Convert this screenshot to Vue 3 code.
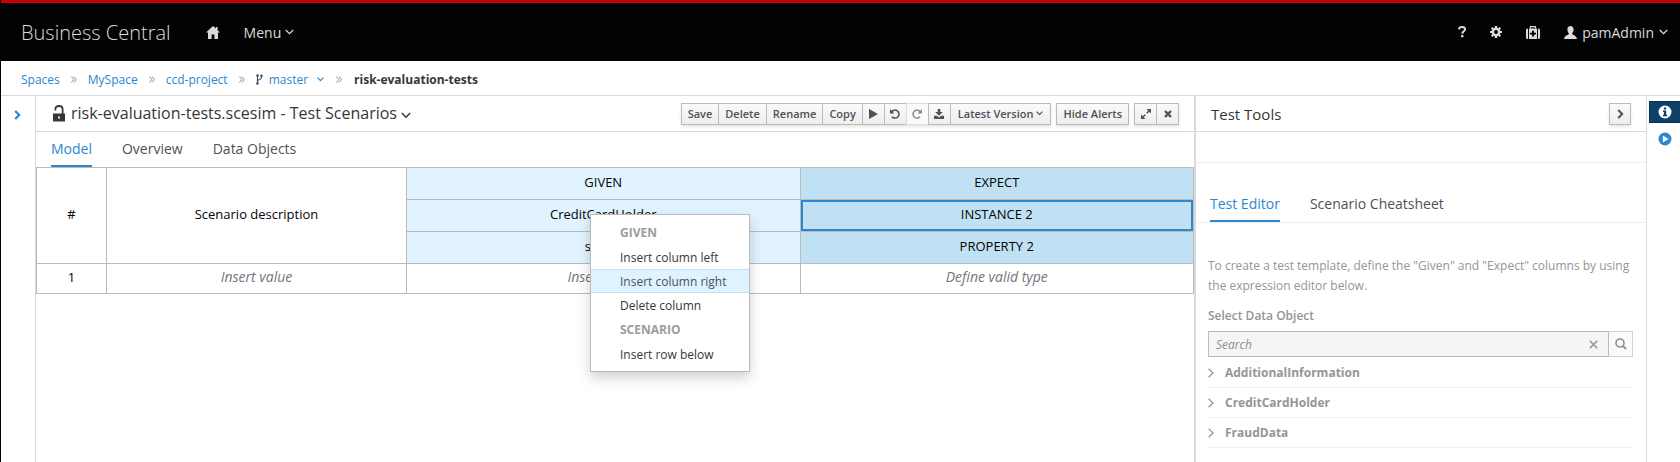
<script setup>
import { ref } from 'vue'

const crumbs = ['Spaces', 'MySpace', 'ccd-project']
const tabs = ['Model', 'Overview', 'Data Objects']
const toolTabs = ['Test Editor', 'Scenario Cheatsheet']
const dataObjects = ['AdditionalInformation', 'CreditCardHolder', 'FraudData']
const query = ref('')
</script>

<template>
  <div class="app">
    <header class="masthead">
      <span class="brand">Business Central</span>
      <button class="nav home" aria-label="Home">
        <svg width="14" height="13" viewBox="0 0 14 13"><path d="M7 0 0 6.600h2V13h3.600V8.600h2.800V13H12V6.600h2L11.600 4.300V1H9.800v1.600z" fill="currentColor" /></svg>
      </button>
      <button class="nav menu-btn">Menu
        <svg width="9" height="6" viewBox="0 0 9 6"><path d="M.8 1 4.500 4.600 8.200 1" fill="none" stroke="currentColor" stroke-width="1.300" /></svg>
      </button>
      <div class="utilities">
        <button class="nav" aria-label="Help">
          <svg width="8" height="12" viewBox="0 0 8 12"><path d="M1 3.400C1.200 1.800 2.400 1.100 4 1.100s3 .8 3 2.300c0 1.800-2.700 2-2.700 4.300" fill="none" stroke="currentColor" stroke-width="2" /><path d="M3.100 9h2.300v2.300H3.100z" fill="currentColor" /></svg>
        </button>
        <button class="nav" aria-label="Settings">
          <svg width="12" height="12" viewBox="0 0 12 12"><circle cx="6" cy="6" r="3.200" fill="none" stroke="currentColor" stroke-width="2.600" /><path d="M6 0v2M6 10v2M0 6h2M10 6h2M1.700 1.700l1.500 1.500M8.800 8.800l1.500 1.500M1.700 10.300l1.500-1.500M8.800 3.200l1.500-1.500" stroke="currentColor" stroke-width="2.200" /></svg>
        </button>
        <button class="nav" aria-label="Applications">
          <svg width="14" height="13" viewBox="0 0 14 13"><path d="M4.500 2.500V.7h5v1.800" fill="none" stroke="currentColor" stroke-width="1.200" /><path d="M2 2.500H1.500Q0 2.500 0 4v7.500Q0 13 1.500 13H2zM12 2.500h.5Q14 2.500 14 4v7.500q0 1.500-1.500 1.500H12z" fill="currentColor" /><path fill-rule="evenodd" d="M3 2.500h8V13H3zM6.100 4.700v2H4.100v1.900h2v2h1.900v-2h2V6.700H8v-2z" fill="currentColor" /></svg>
        </button>
        <button class="nav user">
          <svg width="13" height="13" viewBox="0 0 13 13"><path d="M6.500 0C8.500 0 9.600 1.300 9.600 3.500c0 1.800-.7 3.200-1.600 4 0 1.600 4.500 1.500 5 5.500H0c.5-4 5-3.900 5-5.500-.9-.8-1.600-2.200-1.600-4C3.400 1.300 4.500 0 6.500 0z" fill="currentColor" /></svg>
          <span>pamAdmin</span>
          <svg width="9" height="6" viewBox="0 0 9 6"><path d="M.8 1 4.500 4.600 8.200 1" fill="none" stroke="currentColor" stroke-width="1.300" /></svg>
        </button>
      </div>
    </header>

    <nav class="crumbs" aria-label="Breadcrumb">
      <template v-for="c in crumbs" :key="c">
        <a href="#">{{ c }}</a>
        <svg class="sep" width="6" height="7" viewBox="0 0 6 7"><path d="M.4.500 2.800 3.500.4 6.500M3 .5l2.400 3L3 6.500" fill="none" stroke="currentColor" /></svg>
      </template>
      <svg class="branch" width="7" height="11" viewBox="0 0 7 11"><path d="M1.500 1v9M5.500 1.500v1.800Q5.500 5 3.500 5.500T1.600 7.500" fill="none" stroke="currentColor" stroke-width="1.200" /><circle cx="1.500" cy="1.500" r="1.300" fill="currentColor" /><circle cx="5.500" cy="1.700" r="1.300" fill="currentColor" /><circle cx="1.500" cy="9.500" r="1.300" fill="currentColor" /></svg>
      <a href="#" class="branch-link">master
        <svg width="7" height="5" viewBox="0 0 7 5"><path d="M.6.700 3.500 3.700 6.400.7" fill="none" stroke="currentColor" stroke-width="1.200" /></svg>
      </a>
      <svg class="sep last" width="6" height="7" viewBox="0 0 6 7"><path d="M.4.500 2.800 3.500.4 6.500M3 .5l2.400 3L3 6.500" fill="none" stroke="currentColor" /></svg>
      <strong>risk-evaluation-tests</strong>
    </nav>

    <div class="workspace">
      <aside class="left-rail">
        <button class="plain" aria-label="Expand panel">
          <svg width="7" height="10" viewBox="0 0 7 10"><path d="M1.200 1 5.200 5l-4 4" fill="none" stroke="currentColor" stroke-width="2.200" /></svg>
        </button>
      </aside>

      <main class="editor">
        <div class="titlebar">
          <svg class="lock" width="12" height="17" viewBox="0 0 12 17"><path d="M0 8.500h12V16.500H0z" fill="currentColor" /><path d="M2.400 5.500V4.200C2.400 2 3.800 1 6 1s3.600 1 3.600 3.200V9" fill="none" stroke="currentColor" stroke-width="1.800" /><path d="M5.300 11.200h1.500v2.600H5.300z" fill="#fff" /></svg>
          <h1>risk-evaluation-tests.scesim - Test Scenarios</h1>
          <svg class="title-caret" width="10" height="7" viewBox="0 0 10 7"><path d="M.8 1 5 5.200 9.200 1" fill="none" stroke="currentColor" stroke-width="1.400" /></svg>
          <div class="toolbar">
            <div class="group">
              <button>Save</button><button>Delete</button><button>Rename</button><button>Copy</button>
              <button class="icon" aria-label="Run"><svg width="9" height="10" viewBox="0 0 9 10"><path d="M0 0 9 5 0 10z" fill="currentColor" /></svg></button>
              <button class="icon" aria-label="Undo"><svg width="10" height="10" viewBox="0 0 10 10"><path d="M1.700 2.800A4 4 0 1 1 1.900 7.700" fill="none" stroke="currentColor" stroke-width="1.500" /><path d="M0 0v4.400h4.400z" fill="currentColor" /></svg></button>
              <button class="icon" aria-label="Redo" disabled><svg width="10" height="10" viewBox="0 0 10 10"><path d="M8.300 2.800A4 4 0 1 0 8.100 7.700" fill="none" stroke="currentColor" stroke-width="1.500" /><path d="M10 0v4.400H5.600z" fill="currentColor" /></svg></button>
              <button class="icon" aria-label="Download"><svg width="10" height="10" viewBox="0 0 10 10"><path d="M3.700 0h2.600v3h2.500L5 6.800 1.200 3h2.500zM0 6.800h2.800L5 8.600l2.200-1.800H10V10H0z" fill="currentColor" /></svg></button>
              <button class="version">Latest Version <svg width="7" height="5" viewBox="0 0 7 5"><path d="M.6.700 3.500 3.600 6.400.7" fill="none" stroke="currentColor" stroke-width="1.100" /></svg></button>
            </div>
            <div class="group"><button>Hide Alerts</button></div>
            <div class="group">
              <button class="icon" aria-label="Maximize"><svg width="10" height="10" viewBox="0 0 10 10"><path d="M5.500 0H10v4.500zM0 5.500V10h4.500z" fill="currentColor" /><path d="M5.700 4.300 8.300 1.700M1.700 8.300l2.600-2.600" stroke="currentColor" stroke-width="1.500" /></svg></button>
              <button class="icon" aria-label="Close"><svg width="8" height="8" viewBox="0 0 8 8"><path d="M1 1l6 6M7 1 1 7" stroke="currentColor" stroke-width="2.400" /></svg></button>
            </div>
          </div>
        </div>

        <nav class="tabs">
          <a v-for="(t, i) in tabs" :key="t" href="#" :class="{ active: i === 0 }">{{ t }}</a>
        </nav>

        <div class="grid-area">
          <table>
            <colgroup><col class="c-num" /><col class="c-desc" /><col /><col /></colgroup>
            <thead>
              <tr><th rowspan="3">#</th><th rowspan="3">Scenario description</th><th class="given">GIVEN</th><th class="expect">EXPECT</th></tr>
              <tr><th class="given">CreditCardHolder</th><th class="expect selected">INSTANCE 2</th></tr>
              <tr><th class="given">status</th><th class="expect">PROPERTY 2</th></tr>
            </thead>
            <tbody>
              <tr><td>1</td><td class="hint">Insert value</td><td class="hint">Insert value</td><td class="hint">Define valid type</td></tr>
            </tbody>
          </table>
          <div class="context" role="menu">
            <div class="heading">GIVEN</div>
            <button role="menuitem">Insert column left</button>
            <button role="menuitem" class="hover">Insert column right</button>
            <button role="menuitem">Delete column</button>
            <div class="heading">SCENARIO</div>
            <button role="menuitem">Insert row below</button>
          </div>
        </div>
      </main>

      <section class="tools">
        <div class="tools-head">
          <h2>Test Tools</h2>
          <button class="collapse" aria-label="Collapse panel">
            <svg width="7" height="10" viewBox="0 0 7 10"><path d="M1.200 1 5.200 5l-4 4" fill="none" stroke="currentColor" stroke-width="2" /></svg>
          </button>
        </div>
        <div class="spacer"></div>
        <nav class="tool-tabs">
          <a v-for="(t, i) in toolTabs" :key="t" href="#" :class="{ active: i === 0 }">{{ t }}</a>
        </nav>
        <div class="tool-body">
          <p>To create a test template, define the "Given" and "Expect" columns by using the expression editor below.</p>
          <label for="search">Select Data Object</label>
          <div class="search">
            <div class="field">
              <input id="search" v-model="query" type="text" placeholder="Search" />
              <button class="plain" aria-label="Clear"><svg width="9" height="9" viewBox="0 0 8 8"><path d="M.7.700l6.600 6.600M7.300.7.700 7.300" stroke="currentColor" stroke-width="1.400" /></svg></button>
            </div>
            <button class="go" aria-label="Search"><svg width="12" height="12" viewBox="0 0 12 12"><circle cx="5" cy="5" r="4" fill="none" stroke="currentColor" stroke-width="1.600" /><path d="M8 8l3.200 3.200" stroke="currentColor" stroke-width="1.800" /></svg></button>
          </div>
          <ul>
            <li v-for="o in dataObjects" :key="o">
              <svg width="6" height="10" viewBox="0 0 6 10"><path d="M.7.700 5 5 .7 9.300" fill="none" stroke="currentColor" stroke-width="1.300" /></svg>
              <span>{{ o }}</span>
            </li>
          </ul>
        </div>
      </section>

      <aside class="right-rail">
        <button class="dock on" aria-label="Test Tools"><svg width="14" height="14" viewBox="0 0 14 14"><circle cx="7" cy="7" r="6.500" fill="#fff" /><path d="M5.900 2.500h2.300v1.900H5.900zM5 5.500h3.200v4.300h1v1.400H4.900V9.800h1V6.900H5z" fill="#0f4068" /></svg></button>
        <button class="dock" aria-label="Test Report"><svg width="14" height="14" viewBox="0 0 14 14"><circle cx="7" cy="7" r="6.500" fill="#2b87d0" /><path d="M4.800 3.600 10.600 7l-5.800 3.400z" fill="#fff" /></svg></button>
      </aside>
    </div>
  </div>
</template>

<style>
body { background: #fff; }
</style>

<style scoped>
* { box-sizing: border-box; }
.app {
  display: flex;
  flex-direction: column;
  min-height: 100vh;
  border-left: 1px solid #000;
  font-family: "Open Sans", sans-serif;
  font-size: 12px;
  color: #363636;
}
svg { display: block; flex: none; }
button { font-family: inherit; cursor: pointer; }
a { color: #2b87d0; text-decoration: none; }
h1, h2, p, ul { margin: 0; padding: 0; font-weight: 400; }

.masthead {
  display: flex;
  align-items: center;
  height: 61px;
  padding: 0 12px 0 20px;
  border-top: 3px solid #c7000b;
  background: #030303;
  color: #dbdbdb;
}
.brand { font-size: 20px; font-weight: 300; }
.nav { display: flex; align-items: center; padding: 0; border: 0; background: none; color: inherit; font-size: 14px; }
.home { margin: 0 24px 0 35px; }
.menu-btn { gap: 4px; }
.utilities { display: flex; align-items: center; gap: 24px; margin-left: auto; }
.user { gap: 5px; }

.crumbs {
  display: flex;
  align-items: center;
  height: 35px;
  padding: 2px 20px 0;
  border-bottom: 1px solid #d9d9d9;
}
.sep { margin: 0 11px; color: #8b8d8f; }
.last { margin: 0 12px; }
.branch { margin-right: 6px; color: #4d5258; }
.branch-link { display: flex; align-items: center; gap: 9px; }

.workspace { display: flex; flex: 1; }
.plain { padding: 0; border: 0; background: none; color: inherit; }
.left-rail { width: 35px; padding: 11px 0 0 13px; border-right: 1px solid #d9d9d9; color: #2b87d0; }
.editor { flex: 1; min-width: 0; }
.titlebar {
  display: flex;
  align-items: center;
  height: 36px;
  padding: 0 15px 0 17px;
  border-bottom: 1px solid #d9d9d9;
}
.lock { margin-right: 6px; color: #363636; }
h1, h2 { color: #363636; font-size: 16px; line-height: 20px; }
h1 { padding-bottom: 2px; }
h2 { font-size: 15px; }
.title-caret { margin: 3px 0 0 4px; }
.toolbar { display: flex; gap: 5px; margin-left: auto; }
.group { display: flex; box-shadow: 0 2px 3px rgba(3, 3, 3, 0.1); }
.group button {
  display: flex;
  align-items: center;
  justify-content: center;
  gap: 3px;
  height: 22px;
  padding: 0 6px;
  border: 1px solid #bbb;
  background: linear-gradient(#fafafa, #ededed);
  color: #4d5258;
  font-size: 11px;
  font-weight: 600;
}
.group button + button { margin-left: -1px; }
.group .icon { width: 23px; padding: 0; }
.group .version { padding: 0 7px; }
.group button:disabled { border-color: #ddd; background: #fafafa; color: #8b8d8f; }

.tabs { display: flex; gap: 30px; height: 35px; padding: 0 15px; }
.tabs a, .tool-tabs a { display: flex; align-items: center; border-bottom: 2px solid transparent; color: #4d5258; font-size: 14px; }
.tabs a.active, .tool-tabs a.active { border-color: #2b87d0; color: #2b87d0; }

.grid-area { position: relative; }
table { width: 100%; border-collapse: collapse; table-layout: fixed; }
.c-num { width: 70px; }
.c-desc { width: 300px; }
th, td { height: 32px; padding: 0 0 4px; border: 1px solid #bbb; color: #030303; font-size: 13px; font-weight: 400; text-align: center; }
td { height: 30px; }
.given { background: #e0f3ff; }
.expect { background: #c0e1f4; }
.selected { box-shadow: inset 0 0 0 2px #2b87d0; }
.hint { color: #72767b; font-size: 14px; font-style: italic; }

.context {
  position: absolute;
  top: 47px;
  left: 554px;
  width: 160px;
  padding: 5px 0;
  border: 1px solid #bbb;
  background: #fff;
  box-shadow: 0 6px 12px rgba(3, 3, 3, 0.18);
}
.context .heading { height: 25px; padding-left: 29px; color: #9c9c9c; font-weight: 700; line-height: 25px; }
.context button {
  display: block;
  width: 100%;
  height: 24px;
  padding: 0 0 0 29px;
  border: 0 solid #bee1f4;
  background: none;
  color: #363636;
  font-size: 12px;
  text-align: left;
}
.context .hover { border-width: 1px 0; background: #def3ff; color: #4d5258; }

.tools { width: 452px; border-left: 2px solid #d9d9d9; }
.tools-head {
  display: flex;
  align-items: center;
  justify-content: space-between;
  height: 36px;
  padding: 0 15px;
  border-bottom: 1px solid #d9d9d9;
}
.collapse { display: grid; place-items: center; width: 22px; height: 22px; padding: 0; border: 1px solid #bbb; background: linear-gradient(#fafafa, #ededed); box-shadow: 0 2px 3px rgba(3, 3, 3, 0.1); color: #4d5258; }
.spacer { height: 31px; border-bottom: 1px solid #ededed; }
.tool-tabs { display: flex; gap: 30px; height: 60px; padding: 24px 14px 0; border-bottom: 1px solid #ededed; }
.tool-body { padding: 33px 13px 0 12px; color: #959595; }
p { line-height: 20px; }
label { display: block; margin: 11px 0 6px; line-height: 18px; font-weight: 600; }
.search { display: flex; margin-bottom: 1px; }
.field { display: flex; flex: 1; align-items: center; height: 26px; padding-right: 10px; border: 1px solid #bbb; background: #f5f5f5; }
input { flex: 1; min-width: 0; padding: 0 7px; border: 0; outline: 0; background: none; color: inherit; font-family: inherit; font-size: 12px; }
input::placeholder { color: #8f8f8f; font-style: italic; opacity: 1; }
.go { display: grid; place-items: center; width: 24px; padding: 0; border: 1px solid #d1d1d1; border-left: 0; background: #fafafa; color: #8f8f8f; }
ul { list-style: none; }
li { display: flex; align-items: center; gap: 11px; height: 30px; border-bottom: 1px solid #f0f0f0; font-weight: 700; }

.right-rail { width: 34px; padding: 5px 0 0 2px; border-left: 1px solid #d9d9d9; }
.dock { display: flex; align-items: center; width: 100%; height: 22px; margin-bottom: 5px; padding: 0 0 0 8px; border: 1px solid transparent; background: none; }
.on { border-color: #0a2f4d; border-right: 0; background: #0f4068; }
</style>
